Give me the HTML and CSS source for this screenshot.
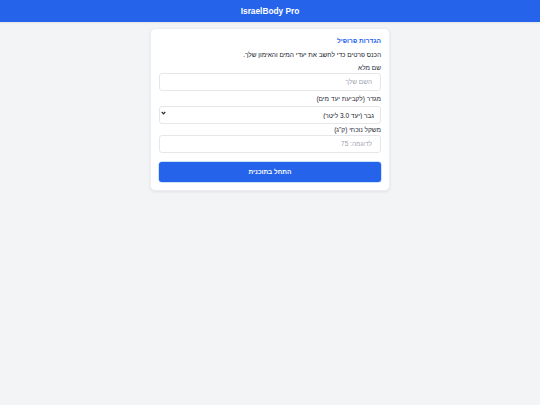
FILE: index.html
```html
<!DOCTYPE html>
<html lang="he">
<head>
<meta charset="utf-8">
<title>IsraelBody Pro</title>
<link rel="stylesheet" href="styles.css">
</head>
<body>
<header class="topbar"><span class="brand">IsraelBody Pro</span></header>
<main class="page">
  <section class="card" dir="rtl">
    <h2 class="card-title">הגדרות פרופיל</h2>
    <p class="intro">הכנס פרטים כדי לחשב את יעדי המים והאימון שלך.</p>
    <div class="field">
      <label class="label">שם מלא</label>
      <input class="control" type="text" placeholder="השם שלך">
    </div>
    <div class="field">
      <label class="label">מגדר (לקביעת יעד מים)</label>
      <div class="select-wrap">
        <select class="control select">
          <option>גבר (יעד 3.0 ליטר)</option>
        </select>
        <svg class="chev" width="5" height="4" viewBox="0 0 5 4"><path d="M0.7 0.9 L2.5 2.8 L4.3 0.9" fill="none" stroke="#222" stroke-width="1.2"/></svg>
      </div>
    </div>
    <div class="field">
      <label class="label">משקל נוכחי (ק"ג)</label>
      <input class="control" type="text" placeholder="לדוגמה: 75">
    </div>
    <button class="btn">התחל בתוכנית</button>
  </section>
</main>
</body>
</html>
```
FILE: styles.css
```css
* { box-sizing: border-box; }
html, body { margin: 0; padding: 0; }
body {
  background: #f3f4f6;
  font-family: "Liberation Sans", Arial, "DejaVu Sans", sans-serif;
  color: #1f2937;
  height: 405px;
}
.topbar {
  height: 22px;
  background: #2563eb;
  color: #fff;
  display: flex;
  align-items: center;
  justify-content: center;
  box-shadow: 0 1px 2px rgba(0,0,0,0.08);
}
.brand {
  font-weight: bold;
  font-size: 8.3px;
  line-height: 1;
}
.page {
  display: flex;
  justify-content: center;
  padding-top: 6px;
}
.card {
  width: 240px;
  background: #fff;
  border-radius: 5px;
  box-shadow: 0 1px 3px rgba(0,0,0,0.08);
  border: 1px solid #eceef1;
  padding: 7px 8px 8px;
  display: flex;
  flex-direction: column;
}
.card-title {
  margin: 0;
  height: 9px;
  font-size: 6.6px;
  line-height: 9px;
  font-weight: bold;
  color: #2563eb;
}
.intro {
  margin: 5px 0 5px;
  height: 9px;
  font-size: 6.5px;
  line-height: 9px;
  color: #111827;
}
.field {
  display: flex;
  flex-direction: column;
  margin-bottom: 4.5px;
}
.label {
  display: block;
  height: 8.5px;
  font-size: 6.5px;
  line-height: 8.5px;
  color: #1f2937;
}
.control {
  width: 100%;
  height: 18px;
  flex: none;
  border: 1px solid #e5e7eb;
  border-radius: 3px;
  background: #fff;
  padding: 0 8px;
  font-family: inherit;
  font-size: 6.5px;
  color: #111827;
  direction: rtl;
  outline: none;
}
.control::placeholder { color: #9ca3af; }
.select-wrap {
  position: relative;
  height: 18px;
}
.select {
  appearance: none;
  -webkit-appearance: none;
  padding: 0 6px 0 14px;
}
.chev {
  position: absolute;
  left: 2px;
  top: 7px;
  pointer-events: none;
}
.btn {
  margin-top: 5px;
  height: 19.5px;
  border: none;
  border-radius: 3px;
  background: #2563eb;
  color: #fff;
  font-family: inherit;
  font-weight: bold;
  font-size: 6.5px;
  box-shadow: 0 0 0 0.5px #93c5fd;
}
```
